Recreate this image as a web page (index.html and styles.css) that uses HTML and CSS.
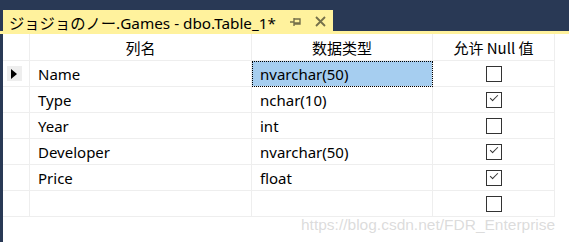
FILE: index.html
```html
<!DOCTYPE html>
<html>
<head>
<meta charset="utf-8">
<link rel="stylesheet" href="styles.css">
</head>
<body>
<div class="window">
  <div class="tabbar">
    <div class="tab">
      <span class="tab-title">ジョジョのノー.Games - dbo.Table_1*</span>
      <svg class="pin" width="12" height="10" viewBox="0 0 12 10">
        <path d="M0 5H4M4 1V9M4 2H10V7H4M4 6H10" stroke="#75704a" stroke-width="1.4" fill="none"/>
      </svg>
      <svg class="close" width="11" height="11" viewBox="0 0 11 11">
        <path d="M1 1L10 10M10 1L1 10" stroke="#75704a" stroke-width="1.8" fill="none"/>
      </svg>
    </div>
  </div>
  <div class="content">
    <div class="grid">
      <div class="cell head rh"></div>
      <div class="cell head">列名</div>
      <div class="cell head">数据类型</div>
      <div class="cell head">允许 Null 值</div>

      <div class="cell rh"><span class="selector"><span class="tri"></span></span></div>
      <div class="cell">Name</div>
      <div class="cell selected">nvarchar(50)</div>
      <div class="cell chk"><span class="box"></span></div>

      <div class="cell rh"></div>
      <div class="cell">Type</div>
      <div class="cell">nchar(10)</div>
      <div class="cell chk"><span class="box checked"></span></div>

      <div class="cell rh"></div>
      <div class="cell">Year</div>
      <div class="cell">int</div>
      <div class="cell chk"><span class="box"></span></div>

      <div class="cell rh"></div>
      <div class="cell">Developer</div>
      <div class="cell">nvarchar(50)</div>
      <div class="cell chk"><span class="box checked"></span></div>

      <div class="cell rh"></div>
      <div class="cell">Price</div>
      <div class="cell">float</div>
      <div class="cell chk"><span class="box checked"></span></div>

      <div class="cell rh"></div>
      <div class="cell"></div>
      <div class="cell"></div>
      <div class="cell chk"><span class="box"></span></div>
    </div>
    <div class="watermark">https://blog.csdn.net/FDR_Enterprise</div>
  </div>
</div>
</body>
</html>
```

FILE: styles.css
```css
html, body {
  margin: 0;
  padding: 0;
  background: #293955;
  width: 569px;
  height: 242px;
  overflow: hidden;
}

.window {
  display: flex;
  flex-direction: column;
  height: 242px;
}

.tabbar {
  height: 21px;
  padding-top: 10px;
  padding-left: 3px;
  border-bottom: 3px solid #fff29d;
  display: flex;
}

.tab {
  width: 330px;
  height: 21px;
  background: #fff29d;
  display: flex;
  align-items: center;
  font-family: "Noto Sans", "Noto Sans CJK JP", sans-serif;
  font-size: 15.3px;
  color: #000;
}

.tab-title {
  margin-left: 6px;
  white-space: nowrap;
  margin-top: 3px;
}

.pin {
  margin-left: 14px;
  margin-top: 2px;
}

.close {
  margin-left: 13px;
  margin-top: 2px;
}

.content {
  flex: 1;
  margin-left: 3px;
  background: #fff;
  position: relative;
}

.grid {
  display: grid;
  grid-template-columns: 27px 222px 181px 122px;
  grid-template-rows: 27px repeat(6, 26px);
  font-family: "Noto Sans", "Noto Sans CJK SC", sans-serif;
  font-size: 15px;
  color: #000;
}

.cell {
  box-sizing: border-box;
  border-right: 1px solid #eeeeee;
  border-bottom: 1px solid #eeeeee;
  padding-left: 8px;
  display: flex;
  align-items: center;
  white-space: nowrap;
}

.cell.head {
  justify-content: center;
  padding-left: 0;
  font-family: "Noto Sans CJK SC", "Noto Sans", sans-serif;
  font-size: 15px;
}

.cell.rh {
  padding-left: 0;
  justify-content: center;
}

.selector {
  width: 15px;
  height: 15px;
  background: #eeeeee;
  display: flex;
  align-items: center;
  justify-content: center;
  margin-left: -4px;
}

.tri {
  width: 0;
  height: 0;
  border-top: 5px solid transparent;
  border-bottom: 5px solid transparent;
  border-left: 6px solid #000;
}

.selected {
  background: #a6cef0;
  outline: 1px dotted #000;
  outline-offset: -1px;
}

.chk {
  justify-content: center;
  padding-left: 0;
}

.box {
  box-sizing: border-box;
  width: 16px;
  height: 16px;
  border: 1px solid #333;
  background: #fff;
  position: relative;
}

.box.checked::after {
  content: "";
  position: absolute;
  left: 3px;
  top: 2.5px;
  width: 7px;
  height: 3px;
  border-left: 1.6px solid #333;
  border-bottom: 1.6px solid #333;
  transform: rotate(-45deg);
  transform-origin: center;
}

.watermark {
  position: absolute;
  left: 298px;
  top: 182px;
  font-family: "Liberation Sans", Arial, sans-serif;
  font-size: 15.5px;
  color: rgba(190, 190, 190, 0.55);
  white-space: nowrap;
}
```
